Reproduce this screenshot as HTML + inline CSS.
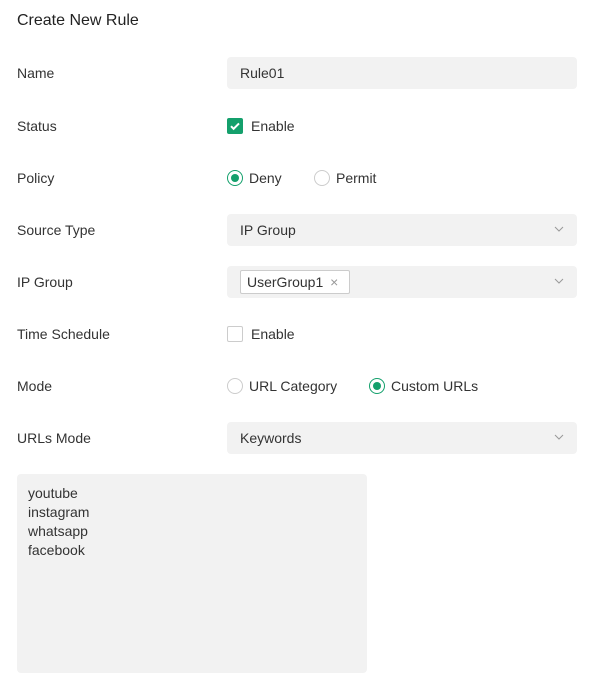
<!DOCTYPE html>
<html><head><meta charset="utf-8"><style>
*{box-sizing:border-box;margin:0;padding:0}
body{width:614px;height:679px;background:#fff;font-family:"Liberation Sans",sans-serif;color:#333;font-size:14px;position:relative;overflow:hidden}
.a{position:absolute;white-space:nowrap}
.lbl{left:17px;line-height:20px}
.fld{left:227px;width:350px;height:32px;background:#f2f2f2;border-radius:4px}
.fld span{position:absolute;left:13px;top:7px;line-height:18px}
.chev{position:absolute;right:13px;top:12px}
.cb{width:16px;height:16px;border-radius:2px}
.rd{width:16px;height:16px;border-radius:50%;border:1px solid #ccc;background:#fff}
.rd.on{border-color:#14a06c}
.rd.on::after{content:"";position:absolute;left:3px;top:3px;width:8px;height:8px;border-radius:50%;background:#14a06c}
</style></head><body>
<div class="a" style="left:17px;top:11px;font-size:16px;line-height:20px;color:#222">Create New Rule</div>

<div class="a lbl" style="top:63px">Name</div>
<div class="a fld" style="top:57px"><span>Rule01</span></div>

<div class="a lbl" style="top:116px">Status</div>
<div class="a cb" style="left:227px;top:118px;background:#14a06c"><svg width="16" height="16"><path d="M4 8.2l2.6 2.6L12 5.4" stroke="#fff" stroke-width="2" fill="none"/></svg></div>
<div class="a" style="left:251px;top:116px;line-height:20px">Enable</div>

<div class="a lbl" style="top:168px">Policy</div>
<div class="a rd on" style="left:227px;top:170px"></div>
<div class="a" style="left:249px;top:168px;line-height:20px">Deny</div>
<div class="a rd" style="left:314px;top:170px"></div>
<div class="a" style="left:336px;top:168px;line-height:20px">Permit</div>

<div class="a lbl" style="top:220px">Source Type</div>
<div class="a fld" style="top:214px"><span>IP Group</span><svg class="chev" width="10" height="7"><path d="M1 1l4 4 4-4" stroke="#999" fill="none"/></svg></div>

<div class="a lbl" style="top:272px">IP Group</div>
<div class="a fld" style="top:266px">
<div class="a" style="left:13px;top:4px;width:110px;height:24px;background:#fff;border:1px solid #ccc;border-radius:2px;line-height:22px;padding-left:6px">UserGroup1 <span style="position:static;color:#999;margin-left:3px">×</span></div>
<svg class="chev" width="10" height="7"><path d="M1 1l4 4 4-4" stroke="#999" fill="none"/></svg></div>

<div class="a lbl" style="top:324px">Time Schedule</div>
<div class="a cb" style="left:227px;top:326px;border:1px solid #ccc"></div>
<div class="a" style="left:251px;top:324px;line-height:20px">Enable</div>

<div class="a lbl" style="top:376px">Mode</div>
<div class="a rd" style="left:227px;top:378px"></div>
<div class="a" style="left:249px;top:376px;line-height:20px">URL Category</div>
<div class="a rd on" style="left:369px;top:378px"></div>
<div class="a" style="left:391px;top:376px;line-height:20px">Custom URLs</div>

<div class="a lbl" style="top:428px">URLs Mode</div>
<div class="a fld" style="top:422px"><span>Keywords</span><svg class="chev" width="10" height="7"><path d="M1 1l4 4 4-4" stroke="#999" fill="none"/></svg></div>

<div class="a" style="left:17px;top:474px;width:350px;height:199px;background:#f2f2f2;border-radius:4px;padding:10px 11px;line-height:19px">youtube<br>instagram<br>whatsapp<br>facebook</div>
</body></html>
